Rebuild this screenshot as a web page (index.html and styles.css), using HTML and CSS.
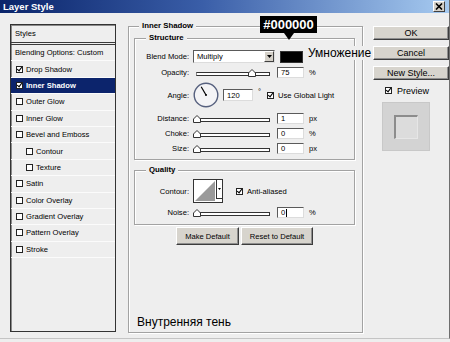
FILE: index.html
```html
<!DOCTYPE html>
<html>
<head>
<meta charset="utf-8">
<title>Layer Style</title>
<link rel="stylesheet" href="styles.css">
</head>
<body>
<div class="window">
  <div class="titlebar">
    <span class="title">Layer Style</span>
    <span class="close"><svg width="8" height="7" viewBox="0 0 8 7"><path d="M1 0.5 L7 6.5 M7 0.5 L1 6.5" stroke="#000" stroke-width="1.6"/></svg></span>
  </div>
  <div class="body">
    <div class="list">
      <div class="list-head">Styles</div>
      <div class="item plain">Blending Options: Custom</div>
      <div class="item"><span class="cb on"></span>Drop Shadow</div>
      <div class="item sel"><span class="cb on"></span>Inner Shadow</div>
      <div class="item"><span class="cb"></span>Outer Glow</div>
      <div class="item"><span class="cb"></span>Inner Glow</div>
      <div class="item"><span class="cb"></span>Bevel and Emboss</div>
      <div class="item sub"><span class="cb"></span>Contour</div>
      <div class="item sub"><span class="cb"></span>Texture</div>
      <div class="item"><span class="cb"></span>Satin</div>
      <div class="item"><span class="cb"></span>Color Overlay</div>
      <div class="item"><span class="cb"></span>Gradient Overlay</div>
      <div class="item"><span class="cb"></span>Pattern Overlay</div>
      <div class="item"><span class="cb"></span>Stroke</div>
    </div>

    <div class="group main-group">
      <div class="legend">Inner Shadow</div>
      <div class="group structure">
        <div class="legend legend-in">Structure</div>
        <div class="row blend-row">
          <span class="lbl">Blend Mode:</span>
          <div class="select"><span>Multiply</span><span class="sel-btn"><svg width="5" height="3" viewBox="0 0 5 3"><path d="M0 0 H5 L2.5 3 Z" fill="#000"/></svg></span></div>
          <span class="swatch"></span>
        </div>
        <div class="row r-first">
          <span class="lbl">Opacity:</span>
          <div class="slider"><div class="track"></div><svg class="thumb" style="left:55px" width="8" height="8" viewBox="0 0 8 8"><path d="M0.5 7.5 V4 L4 0.5 L7.5 4 V7.5 Z" fill="#fff" stroke="#333"/></svg></div>
          <span class="num">75</span><span class="unit">%</span>
        </div>
        <div class="row angle-row">
          <span class="lbl">Angle:</span>
          <svg class="dial" width="26" height="26" viewBox="0 0 26 26"><circle cx="13" cy="13" r="11.8" fill="#f4f4f6" stroke="#56607e" stroke-width="1.4"/><path d="M13 13 L8.2 4.8" stroke="#000" stroke-width="1.2"/><circle cx="13" cy="13" r="1" fill="#000"/></svg>
          <span class="num num-wide">120</span>
          <span class="deg">°</span>
          <span class="cb on cb-gl"></span><span>Use Global Light</span>
        </div>
        <div class="row r-dist">
          <span class="lbl">Distance:</span>
          <div class="slider"><div class="track"></div><svg class="thumb" style="left:0px" width="8" height="8" viewBox="0 0 8 8"><path d="M0.5 7.5 V4 L4 0.5 L7.5 4 V7.5 Z" fill="#fff" stroke="#333"/></svg></div>
          <span class="num">1</span><span class="unit">px</span>
        </div>
        <div class="row r-next">
          <span class="lbl">Choke:</span>
          <div class="slider"><div class="track"></div><svg class="thumb" style="left:0px" width="8" height="8" viewBox="0 0 8 8"><path d="M0.5 7.5 V4 L4 0.5 L7.5 4 V7.5 Z" fill="#fff" stroke="#333"/></svg></div>
          <span class="num">0</span><span class="unit">%</span>
        </div>
        <div class="row r-next">
          <span class="lbl">Size:</span>
          <div class="slider"><div class="track"></div><svg class="thumb" style="left:0px" width="8" height="8" viewBox="0 0 8 8"><path d="M0.5 7.5 V4 L4 0.5 L7.5 4 V7.5 Z" fill="#fff" stroke="#333"/></svg></div>
          <span class="num">0</span><span class="unit">px</span>
        </div>
      </div>

      <div class="group quality">
        <div class="legend legend-in">Quality</div>
        <div class="row contour-row">
          <span class="lbl">Contour:</span>
          <div class="contour">
            <svg class="curve" width="22" height="22" viewBox="0 0 22 22"><path d="M1 21 L21 1 V21 Z" fill="#9a9a9a"/></svg>
            <span class="contour-btn"><svg width="3" height="2" viewBox="0 0 3 2"><path d="M0 0 H3 L1.5 2 Z" fill="#000"/></svg></span>
          </div>
          <span class="cb on cb-aa"></span><span>Anti-aliased</span>
        </div>
        <div class="row r-next">
          <span class="lbl">Noise:</span>
          <div class="slider"><div class="track"></div><svg class="thumb" style="left:0px" width="8" height="8" viewBox="0 0 8 8"><path d="M0.5 7.5 V4 L4 0.5 L7.5 4 V7.5 Z" fill="#fff" stroke="#333"/></svg></div>
          <span class="num">0<span class="caret"></span></span><span class="unit">%</span>
        </div>
      </div>

      <div class="btn-row">
        <span class="btn btn-make">Make Default</span>
        <span class="btn btn-reset">Reset to Default</span>
      </div>

      <div class="caption">Внутренняя тень</div>
    </div>

    <div class="side">
      <span class="btn btn-r">OK</span>
      <span class="btn btn-r">Cancel</span>
      <span class="btn btn-r">New Style...</span>
      <div class="preview-row"><span class="cb on"></span><span>Preview</span></div>
      <div class="preview"><div class="preview-inner"></div></div>
    </div>
  </div>

  <div class="tooltip">#000000</div>
  <div class="note">Умножение</div>
</div>
</body>
</html>
```

FILE: styles.css
```css
* { box-sizing: border-box; margin: 0; padding: 0; }

body {
  margin: 0;
  width: 450px;
  height: 342px;
  overflow: hidden;
  background: #eeeeee;
  font-family: "Liberation Sans", Arial, sans-serif;
  font-size: 7.6px;
  color: #000;
}

.window {
  position: relative;
  width: 450px;
  height: 339px;
  background: #eeeeee;
  border-right: 1px solid #6e6e6e;
  border-bottom: 1px solid #c4c4c4;
}

.titlebar {
  height: 13px;
  display: flex;
  align-items: center;
  padding-left: 3px;
  background: linear-gradient(to right, #0a246a 0%, #3a5ea8 45%, #a6caf0 100%);
  color: #fff;
  font-weight: bold;
  font-size: 9.5px;
}

.close {
  margin-left: auto;
  margin-right: 4px;
  width: 12px;
  height: 11px;
  background: #d4d0c8;
  border: 1px solid;
  border-color: #fff #404040 #404040 #fff;
  display: flex;
  align-items: center;
  justify-content: center;
}

.body {
  display: flex;
  align-items: flex-start;
  padding: 11px 0 0 10px;
}

/* ---------- left list ---------- */
.list {
  flex: none;
  width: 106px;
  height: 308px;
  border: 1px solid #333;
  box-shadow: inset 1px 1px 0 #8a8a8a;
  display: flex;
  flex-direction: column;
}

.list-head {
  height: 20px;
  padding: 0 0 0 4px;
  line-height: 17px;
  border-bottom: 3px double #3a3a3a;
}

.item {
  height: 16.4px;
  display: flex;
  align-items: center;
  padding-left: 5px;
  border-bottom: 1px solid #fbfbfb;
  white-space: nowrap;
}

.item.plain { padding-left: 4px; }
.item.sub { padding-left: 15px; }

.item.sel {
  background: #0c246c;
  color: #fff;
  font-weight: bold;
}

.cb {
  flex: none;
  position: relative;
  width: 7px;
  height: 7px;
  border: 1px solid #222;
  background: #fff;
  margin-right: 3px;
}

.cb.on::after {
  content: "";
  position: absolute;
  left: 1.2px;
  top: -0.6px;
  width: 2px;
  height: 4px;
  border: solid #000;
  border-width: 0 1.5px 1.5px 0;
  transform: rotate(38deg);
}

/* ---------- group boxes ---------- */
.group {
  border: 1px solid #a2a2a2;
  box-shadow: 1px 1px 0 #ffffff, inset 1px 1px 0 #ffffff;
  display: flex;
  flex-direction: column;
}

.legend {
  align-self: flex-start;
  margin: -6px 0 0 10px;
  padding: 0 3px;
  height: 10px;
  line-height: 10px;
  background: #eeeeee;
  font-weight: bold;
  font-size: 7.8px;
  color: #000;
}

.legend-in { margin-left: 11px; }

.main-group {
  flex: none;
  width: 235px;
  height: 307px;
  margin: 2px 0 0 12px;
}

.structure {
  width: 221px;
  height: 122px;
  margin: 7px 0 0 5px;
}

.quality {
  width: 221px;
  height: 55px;
  margin: 10px 0 0 5px;
}

.row {
  display: flex;
  align-items: center;
  height: 11px;
  white-space: nowrap;
}

.lbl {
  flex: none;
  width: 54px;
  margin-right: 4px;
  text-align: right;
}

.blend-row { height: 13px; margin-top: 7px; }
.r-first { margin-top: 4px; }
.angle-row { height: 26px; margin-top: 4px; }
.r-dist { margin-top: 5px; }
.r-next { margin-top: 4px; }

.select {
  flex: none;
  width: 82px;
  height: 13px;
  background: #fff;
  border: 1px solid;
  border-color: #5a5a5a #dcdcdc #dcdcdc #5a5a5a;
  display: flex;
  align-items: center;
  padding-left: 3px;
}

.sel-btn {
  margin-left: auto;
  width: 10px;
  height: 11px;
  background: #d4d0c8;
  border: 1px solid;
  border-color: #fff #404040 #404040 #fff;
  display: flex;
  align-items: center;
  justify-content: center;
}

.swatch {
  flex: none;
  width: 23px;
  height: 12px;
  margin-left: 5px;
  background: #000;
  border: 1px solid #333;
}

.slider {
  flex: none;
  position: relative;
  width: 77px;
  height: 11px;
}

.track {
  margin: 5px 0 0 3px;
  width: 74px;
  height: 4px;
  background: #fff;
  border: 1px solid #333;
  border-left-color: #888;
}

.thumb {
  position: absolute;
  top: 2px;
}

.num {
  flex: none;
  width: 27px;
  height: 11px;
  margin-left: 7px;
  padding-left: 3px;
  line-height: 9px;
  background: #fff;
  border: 1px solid;
  border-color: #5a5a5a #dcdcdc #dcdcdc #5a5a5a;
  display: flex;
  align-items: center;
}

.num-wide {
  width: 30px;
  height: 12px;
  margin-left: 4px;
}

.caret {
  display: inline-block;
  width: 1px;
  height: 8px;
  margin-left: 1px;
  background: #000;
}

.unit { margin-left: 5px; }

.dial { flex: none; }

.deg {
  align-self: flex-start;
  margin: 5px 0 0 5px;
}

.cb-gl { margin-left: 6px; margin-right: 4px; }

.contour-row { height: 24px; margin-top: 4px; }

.contour {
  flex: none;
  width: 30px;
  height: 24px;
  border: 1px solid #333;
  background: #fff;
  display: flex;
}

.curve { flex: none; }

.contour-btn {
  flex: none;
  width: 6px;
  height: 19px;
  border-left: 1px solid #333;
  border-bottom: 1px solid #333;
  display: flex;
  align-items: center;
  justify-content: center;
}

.cb-aa { margin-left: 13px; margin-right: 4px; }

/* ---------- buttons ---------- */
.btn {
  display: flex;
  align-items: center;
  justify-content: center;
  background: #d7d4cd;
  border: 1px solid;
  border-color: #ffffff #3c3c3c #3c3c3c #ffffff;
  box-shadow: inset -1px -1px 0 #8e8e8e;
  white-space: nowrap;
  color: #000;
}

.btn-row {
  display: flex;
  margin: 2px 0 0 47px;
}

.btn-make { width: 63px; height: 18px; }
.btn-reset { width: 72px; height: 18px; margin-left: 2px; }

.caption {
  margin: auto 0 3px 8px;
  font-size: 12px;
  line-height: 14px;
  color: #000;
}

/* ---------- right column ---------- */
.side {
  flex: none;
  width: 76px;
  margin: 2px 0 0 10px;
  display: flex;
  flex-direction: column;
}

.btn-r {
  width: 76px;
  height: 14px;
  margin-bottom: 6px;
  font-size: 9px;
}

.preview-row {
  display: flex;
  align-items: center;
  height: 9px;
  padding-left: 12px;
  font-size: 9px;
}

.preview-row .cb { margin-right: 5px; }

.preview {
  width: 48px;
  height: 49px;
  margin: 7px 0 0 9px;
  background: #d3d3d3;
  border: 1px solid #c8c8c8;
}

.preview-inner {
  width: 24px;
  height: 24px;
  margin: 12px 0 0 11px;
  background: #dcdcdc;
  border-top: 2px solid #8c8c8c;
  border-left: 2px solid #8c8c8c;
  border-right: 1px solid #e6e6e6;
  border-bottom: 1px solid #e6e6e6;
}

/* ---------- overlays ---------- */
.tooltip {
  position: absolute;
  left: 260px;
  top: 16px;
  width: 57px;
  height: 17px;
  background: #000;
  color: #fff;
  font-weight: bold;
  font-size: 13px;
  line-height: 17px;
  text-align: center;
}

.tooltip::after {
  content: "";
  position: absolute;
  left: 24px;
  top: 17px;
  border-left: 5px solid transparent;
  border-right: 5px solid transparent;
  border-top: 7px solid #000;
}

.note {
  position: absolute;
  left: 307px;
  top: 46px;
  padding: 0 1px;
  background: #eeeeee;
  font-size: 12px;
  line-height: 14px;
  color: #000;
}
```
